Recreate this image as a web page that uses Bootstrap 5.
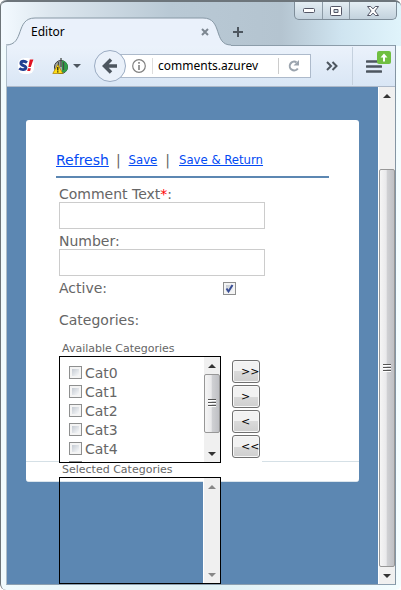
<!DOCTYPE html>
<html lang="en">
<head>
<meta charset="utf-8">
<meta name="viewport" content="width=device-width, initial-scale=1">
<title>Editor</title>
<link href="https://cdn.jsdelivr.net/npm/bootstrap@5.3.0/dist/css/bootstrap.min.css" rel="stylesheet">
<style>
  body { font-family: "DejaVu Sans", sans-serif; font-size: 14px; line-height: 18px; color: #666; background: #fff; }
  svg { display: block; flex: none; }
  button { padding: 0; border: 0; background: none; flex: none; }
  .win { min-height: 100vh; background: linear-gradient(90deg, #f1fbfd, #dff0f4 50%, #f4fdff); border-left: 1px solid #6d7579; border-radius: 6px; }
  .titlebar { height: 46px; padding: 0 4px 0 5px; margin-bottom: -1px; border-top: 2px solid #6d757b; border-radius: 6px 6px 0 0;
    background: linear-gradient(90deg, #f3faff 0, #dde7ef 12%, #b9c9d5 42%, #b4c4d0 70%, #cfe4f0 85%, #e0f4fb); }
  .tab { display: grid; flex: 0 1 225px; margin-top: 15px; position: relative; z-index: 1; }
  .tab > * { grid-area: 1 / 1; }
  .tab-title { font: 12px/28px "Noto Sans", sans-serif; color: #000; padding: 0 22px 0 25px; }
  .plus { margin: 25px 0 0 2px; height: 10px; }
  .winbtns { height: 18px; border: 1px solid #7e8d99; border-top: 0; border-radius: 0 0 5px 5px; background: linear-gradient(#e4eef4, #c3d2dd); }
  .winbtns button { width: 27px; display: grid; place-items: center; }
  .winbtns button + button { border-left: 1px solid #8d9ba6; }
  .winbtns button:last-child { width: 47px; }
  .inner { margin: 0 5px 5px 5px; border-right: 1px solid #8495a3; border-left: 1px solid #aebdc8; border-bottom: 1px solid #8da0b0; }
  .toolbar { height: 42px; border-top: 1px solid #8c9daa; border-bottom: 1px solid #adb9c9; background: linear-gradient(#ebf2fb, #d9e6f5); padding: 0 13px 0 11px; }
  .back { z-index: 1; margin-left: 13px; }
  .url { height: 24px; min-width: 0; background: #fff; border: 1px solid #adbacb; margin: 0 15px 0 -8px; padding: 0 10px 0 13px; }
  .url input { border: 0; border-left: 1px solid #ddd; border-right: 1px solid #ccc; padding: 0 5px; margin: 0 9px 0 6px; min-width: 0; outline: 0; height: 16px; font: 12px/16px "Noto Sans", sans-serif; color: #000; }
  .tsep { width: 1px; height: 38px; background: #c5d1de; margin: 0 13px 0 14px; }
  .menu { position: relative; }
  .menu .upd { position: absolute; left: 11px; top: -9px; }
  .page { background: #5c87b2; padding: 33px 19px 0; min-width: 0; }
  .panel { background: #fff; border-radius: 3px; border-bottom: 1px solid #dbe5ec; }
  /* the picker is taller than the panel and hangs over its lower edge */
  .panel-main { height: 342px; padding: 28px 30px 0; border-bottom: 1px solid #d5e0e6; }
  .panel-foot { height: 19px; }
  .links { height: 30px; border-bottom: 2px solid #5c87b2; line-height: 24px; margin-bottom: 4px; }
  .links a { color: #034af3; }
  .links .bar { padding: 0 8px 0 7px; }
  .links .minor { font-family: "DejaVu Sans Condensed", sans-serif; font-size: 13px; }
  .links .minor + .bar { padding: 0 9px 0 8px; }
  .req { color: #f00; }
  .fields { padding-left: 3px; }
  .fields > label { display: block; height: 20px; padding-top: 3px; }
  .field { display: block; width: 206px; max-width: 100%; height: 27px; border: 1px solid #ccc; padding: 2px 4px; outline: 0; }
  .tick { appearance: none; flex: none; width: 13px; height: 13px; margin: 0; border: 1px solid #8e8f8f; background: linear-gradient(135deg, #c4cad2, #f8f9fa) content-box, #f4f4f4; padding: 2px; }
  .tick:checked { background: url("data:image/svg+xml,%3Csvg xmlns='http://www.w3.org/2000/svg' viewBox='0 0 11 11'%3E%3Cpath d='M2.5 5.5l2 3L8.5 2' fill='none' stroke='%23394e95' stroke-width='2'/%3E%3C/svg%3E") padding-box, linear-gradient(135deg, #c4cad2, #f8f9fa) content-box, #f4f4f4; }
  .active-row { height: 24px; width: 177px; }
  .legend-row { line-height: 40px; height: 42px; }
  .cap { font-size: 11px; line-height: 14px; height: 14px; width: 203px; padding-left: 3px; background: #fff; }
  .picker { width: 203px; background: #fff; }
  .box { width: 162px; height: 107px; border: 1px solid #000; overflow: hidden; flex: none; }
  .items { padding: 7px 0 0 9px; overflow: hidden; }
  .items label { height: 19px; line-height: 19px; gap: 3px; }
  .items .tick { margin-bottom: 2px; }
  .moves { margin: 4px 0 0 11px; gap: 2px; }
  .moves button { width: 28px; height: 23px; border: 1px solid #707070; border-radius: 3px; background: linear-gradient(#f2f2f2 50%, #dadada 50%, #cfcfcf); color: #000; font-size: 11px; line-height: 20px; padding-left: 8px; text-align: left; box-shadow: inset 0 0 0 1px #f8f8f8; white-space: nowrap; }
  .sb { width: 17px; flex: none; background: #f0f0f0; border-left: 1px solid #fff; }
  .sb-cap { height: 17px; flex: none; display: grid; place-items: center; }
  .thumb { border: 1px solid #979797; border-radius: 2px; background: linear-gradient(90deg, #f5f5f5, #e9e9eb 45%, #d0d1d4 50%, #bfc0c4); display: grid; place-items: center; }
  .thumb.short { height: 59px; }
  .page-sb .thumb { margin-top: 65px; }
</style>
<script src="https://cdn.jsdelivr.net/npm/bootstrap@5.3.0/dist/js/bootstrap.bundle.min.js"></script>
</head>
<body>
<svg width="0" height="0" class="position-absolute" aria-hidden="true">
  <symbol id="up" viewBox="0 0 8 4"><path d="M4 0l4 4H0z"/></symbol>
  <symbol id="down" viewBox="0 0 8 4"><path d="M0 0h8L4 4z"/></symbol>
  <symbol id="grip" viewBox="0 0 8 9"><path d="M0 .5h8M0 3.500h8M0 6.500h8" stroke="#555"/><path d="M0 1.500h8M0 4.500h8M0 7.500h8" stroke="#fff"/></symbol>
</svg>
<div class="win d-flex flex-column">
  <header class="titlebar d-flex">
    <div class="tab">
      <svg class="w-100" height="29" viewBox="0 0 225 29" preserveAspectRatio="none" aria-hidden="true">
        <path d="M0 29v-1C19 28 9 1 29 1H197C217 1 207 28 225 28v1z" fill="#eaf1fb"/>
        <path d="M0 28C19 28 9 1 29 1H197C217 1 207 28 225 28" fill="none" stroke="#8798a5"/>
      </svg>
      <div class="tab-title d-flex align-items-center justify-content-between">
        <span>Editor</span>
        <button aria-label="Close tab"><svg width="8" height="8" viewBox="0 0 8 8"><path d="M1 1l6 6M7 1L1 7" stroke="#7d8791" stroke-width="2"/></svg></button>
      </div>
    </div>
    <button class="plus" aria-label="New tab"><svg width="10" height="10" viewBox="0 0 10 10"><path d="M5 0v10M0 5h10" stroke="#4d565f" stroke-width="2"/></svg></button>
    <div class="winbtns d-flex ms-auto">
      <button aria-label="Minimize"><svg width="12" height="5" viewBox="0 0 12 5"><rect x=".5" y=".5" width="11" height="4" rx="1" fill="#fff" stroke="#535666"/></svg></button>
      <button aria-label="Maximize"><svg width="12" height="10" viewBox="0 0 12 10"><path d="M1.500.5h9a1 1 0 011 1v7a1 1 0 01-1 1h-9a1 1 0 01-1-1v-7a1 1 0 011-1zM4 3.500h4v3H4z" fill="#fff" fill-rule="evenodd" stroke="#535666"/></svg></button>
      <button aria-label="Close"><svg width="12" height="10" viewBox="0 0 12 10"><path d="M.5.5h3.200L6 2.900 8.300.5h3.200L7.900 5l3.600 4.500H8.300L6 7.100 3.700 9.500H.5L4.100 5z" fill="#fff" stroke="#535666"/></svg></button>
    </div>
  </header>

  <div class="inner d-flex flex-column flex-fill">
    <nav class="toolbar d-flex align-items-center">
      <button aria-label="S!"><svg width="16" height="16" viewBox="0 0 16 16"><rect width="16" height="16" rx="6" fill="#fff"/><path d="M9 4.600C7 2.900 3.200 2.700 2.900 5.100c-.3 2.700 5.400 2.200 5 4.700-.4 2.400-4.600 2.300-6.600.4" fill="none" stroke="#213f91" stroke-width="2.900"/><path d="M11.800 1.500h3.600l-2.600 7.500h-2.500zM10 10.300h2.900l-.8 2.700H9.200z" fill="#e01221"/></svg></button>
      <button class="d-flex align-items-center gap-1" aria-label="Site tools">
        <svg width="35" height="16" viewBox="-19 0 35 16"><circle cx="8" cy="9" r="6.500" fill="#a8ada9" stroke="#333"/><path d="M9 2.600A6.500 6.500 0 0113 13.500L9 15z" fill="#2f9e48"/><path d="M8 0v9M5.500 4v6M10.500 4v8" stroke="#454b47" stroke-width="1.300"/><path d="M4.800 6.500L9.800 15.500H-.2z" fill="#ffdf16" stroke="#a77c00" stroke-width=".7"/><path d="M4.800 9v3.500M4.800 13.300v1.200" stroke="#111" stroke-width="1.200"/></svg>
        <svg width="8" height="4" fill="#4d565f"><use href="#down"/></svg>
      </button>
      <button class="back" aria-label="Back"><svg width="32" height="32" viewBox="0 0 32 32"><circle cx="16" cy="16" r="15.500" fill="#eaf1fa" stroke="#9aabc2"/><path d="M23 16H12M17 9.500L10.500 16l6.500 6.500" fill="none" stroke="#4d565f" stroke-width="3.500"/></svg></button>
      <div class="url d-flex align-items-center flex-fill">
        <svg width="14" height="14" viewBox="0 0 14 14"><circle cx="7" cy="7" r="6.300" fill="none" stroke="#808080" stroke-width="1.200"/><path d="M7 6v5M7 3v1.700" stroke="#808080" stroke-width="1.600"/></svg>
        <input class="flex-fill" type="text" aria-label="Address" value="comments.azurev">
        <button aria-label="Reload"><svg width="12" height="12" viewBox="0 0 12 12"><path d="M8.500 2.300A4.400 4.400 0 109.800 8.500" fill="none" stroke="#9ba4ae" stroke-width="2"/><path d="M11 0v5.500H5.500z" fill="#9ba4ae"/></svg></button>
      </div>
      <button aria-label="More tools"><svg width="12" height="10" viewBox="0 0 12 10"><path d="M1 1l4 4-4 4M6.500 1l4 4-4 4" fill="none" stroke="#4d565f" stroke-width="2"/></svg></button>
      <span class="tsep"></span>
      <button class="menu" aria-label="Menu"><svg width="16" height="13" viewBox="0 0 16 13"><path d="M1 1.500h14M1 6.500h14M1 11.500h14" stroke="#4d565f" stroke-width="2.600" stroke-linecap="round"/></svg>
        <svg class="upd" width="14" height="13" viewBox="0 0 14 13"><rect width="14" height="13" rx="2" fill="#70bf41"/><path d="M7 2.500L10.500 6.500H8V10.500H6V6.500H3.500z" fill="#fff"/></svg></button>
    </nav>

    <div class="d-flex flex-fill">
      <main class="page flex-fill">
        <div class="panel">
          <form class="panel-main">
            <div class="links d-flex">
              <a href="#">Refresh</a><span class="bar">|</span>
              <a class="minor" href="#">Save</a><span class="bar">|</span>
              <a class="minor" href="#">Save &amp; Return</a>
            </div>
            <div class="fields">
              <label for="comment">Comment Text<span class="req">*</span>:</label>
              <input class="field" type="text" id="comment">
              <label for="number">Number:</label>
              <input class="field" type="text" id="number">
              <div class="active-row d-flex align-items-center justify-content-between">
                <label for="active">Active:</label>
                <input class="tick" type="checkbox" id="active" checked>
              </div>
              <div class="legend-row">Categories:</div>
              <div class="cap">Available Categories</div>
              <div class="picker d-flex">
                <div class="box d-flex">
                  <div class="items flex-fill">
                    <label class="d-flex align-items-center"><input class="tick" type="checkbox">Cat0</label>
                    <label class="d-flex align-items-center"><input class="tick" type="checkbox">Cat1</label>
                    <label class="d-flex align-items-center"><input class="tick" type="checkbox">Cat2</label>
                    <label class="d-flex align-items-center"><input class="tick" type="checkbox">Cat3</label>
                    <label class="d-flex align-items-center"><input class="tick" type="checkbox">Cat4</label>
                    <label class="d-flex align-items-center"><input class="tick" type="checkbox" aria-label="Next category"></label>
                  </div>
                  <div class="sb d-flex flex-column justify-content-between">
                    <div><div class="sb-cap"><svg width="8" height="4" fill="#333"><use href="#up"/></svg></div>
                    <div class="thumb short"><svg width="8" height="9"><use href="#grip"/></svg></div></div>
                    <div class="sb-cap"><svg width="8" height="4" fill="#333"><use href="#down"/></svg></div>
                  </div>
                </div>
                <div class="moves d-flex flex-column">
                  <button type="button">&gt;&gt;</button>
                  <button type="button">&gt;</button>
                  <button type="button">&lt;</button>
                  <button type="button">&lt;&lt;</button>
                </div>
              </div>
              <div class="cap">Selected Categories</div>
              <div class="box d-flex justify-content-end">
                <div class="sb d-flex flex-column justify-content-between">
                  <div class="sb-cap"><svg width="8" height="4" fill="#888"><use href="#up"/></svg></div>
                  <div class="sb-cap"><svg width="8" height="4" fill="#888"><use href="#down"/></svg></div>
                </div>
              </div>
            </div>
          </form>
          <div class="panel-foot"></div>
        </div>
      </main>
      <div class="sb page-sb d-flex flex-column">
        <div class="sb-cap"><svg width="8" height="4" fill="#333"><use href="#up"/></svg></div>
        <div class="thumb flex-fill"><svg width="8" height="9"><use href="#grip"/></svg></div>
        <div class="sb-cap"><svg width="8" height="4" fill="#333"><use href="#down"/></svg></div>
      </div>
    </div>
  </div>
</div>
</body>
</html>
